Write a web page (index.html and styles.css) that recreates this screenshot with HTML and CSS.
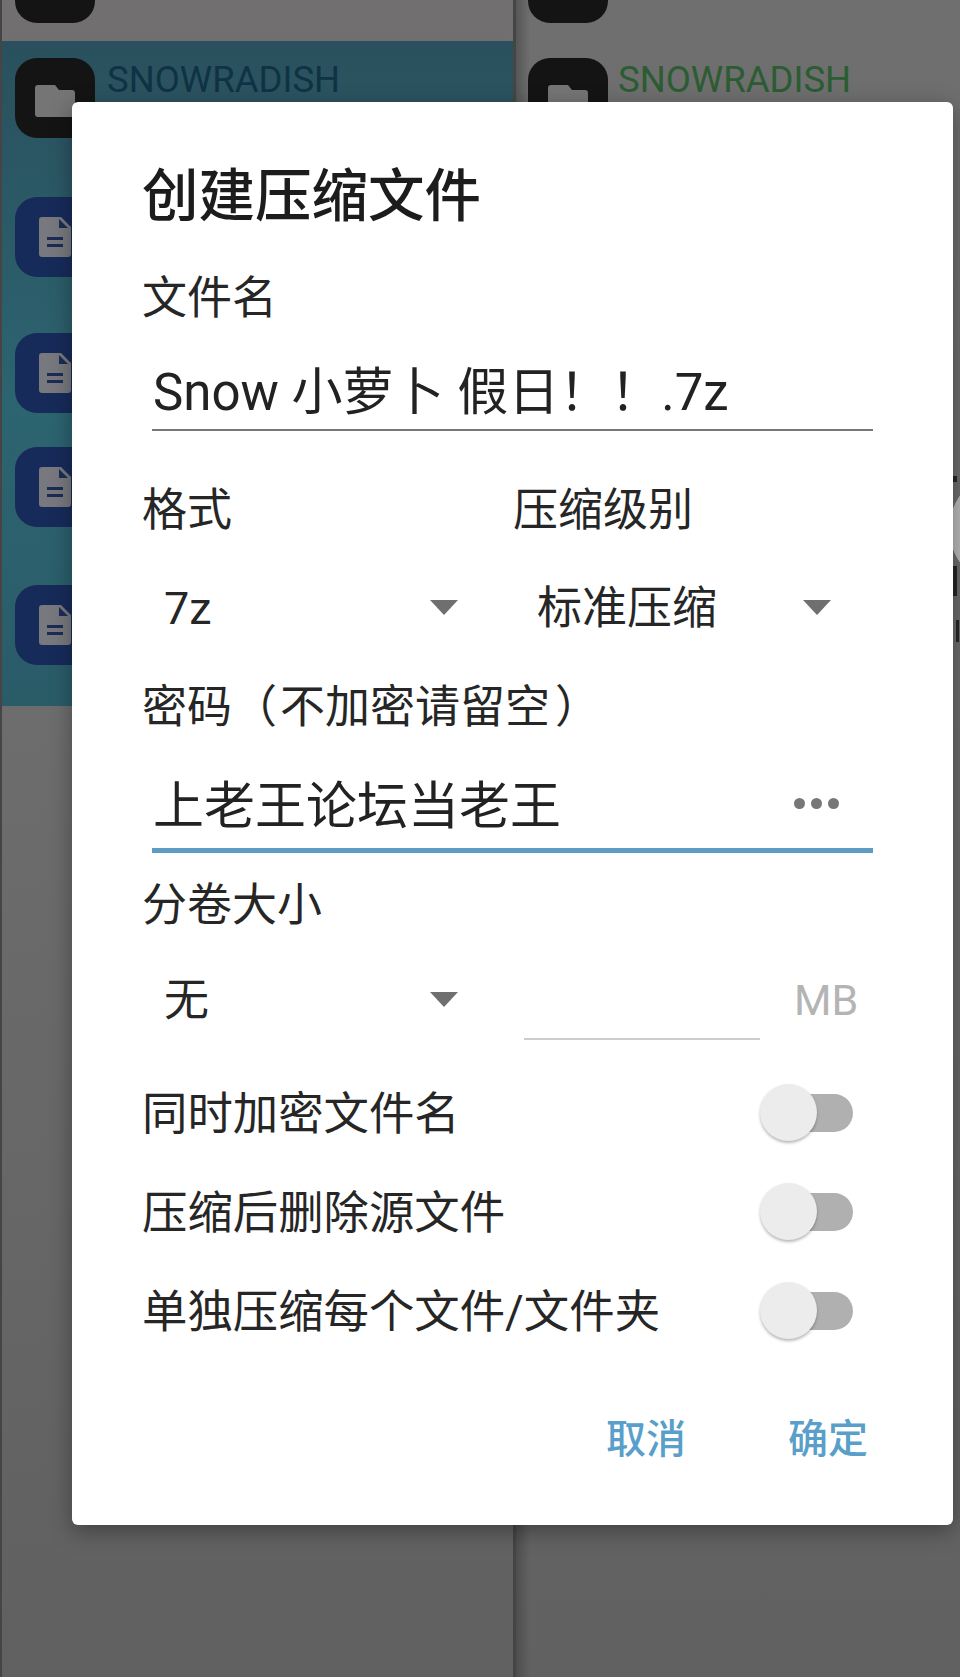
FILE: index.html
```html
<!DOCTYPE html>
<html lang="zh-CN">
<head>
  <meta charset="UTF-8">
  <meta name="viewport" content="width=device-width, initial-scale=1.0">
  <title>创建压缩文件</title>
  <link rel="stylesheet" href="styles.css">
</head>
<body>

  <div class="panes">
    <div class="pane">
      <div class="row-top"><div class="tile tile-folder tile-cut"></div></div>
      <div class="list list-selected">
        <div class="item">
          <div class="tile tile-folder">
            <svg class="glyph-folder" viewBox="0 0 40 32"><path d="M3 0h17l4 5h13a3 3 0 0 1 3 3v21a3 3 0 0 1-3 3H3a3 3 0 0 1-3-3V3a3 3 0 0 1 3-3z"/></svg>
          </div>
          <span class="name name-left">SNOWRADISH</span>
        </div>
        <div class="item"><div class="tile tile-file"><svg class="glyph-file" viewBox="0 0 32 40"><path class="sheet" d="M3 0h19l10 10v27a3 3 0 0 1-3 3H3a3 3 0 0 1-3-3V3a3 3 0 0 1 3-3z"/><path class="mark" d="M20 2l9 9h-9zM8 20h16v3H8zM8 27h16v3H8z"/></svg></div></div>
        <div class="item"><div class="tile tile-file"><svg class="glyph-file" viewBox="0 0 32 40"><path class="sheet" d="M3 0h19l10 10v27a3 3 0 0 1-3 3H3a3 3 0 0 1-3-3V3a3 3 0 0 1 3-3z"/><path class="mark" d="M20 2l9 9h-9zM8 20h16v3H8zM8 27h16v3H8z"/></svg></div></div>
        <div class="item"><div class="tile tile-file"><svg class="glyph-file" viewBox="0 0 32 40"><path class="sheet" d="M3 0h19l10 10v27a3 3 0 0 1-3 3H3a3 3 0 0 1-3-3V3a3 3 0 0 1 3-3z"/><path class="mark" d="M20 2l9 9h-9zM8 20h16v3H8zM8 27h16v3H8z"/></svg></div></div>
        <div class="item"><div class="tile tile-file"><svg class="glyph-file" viewBox="0 0 32 40"><path class="sheet" d="M3 0h19l10 10v27a3 3 0 0 1-3 3H3a3 3 0 0 1-3-3V3a3 3 0 0 1 3-3z"/><path class="mark" d="M20 2l9 9h-9zM8 20h16v3H8zM8 27h16v3H8z"/></svg></div></div>
      </div>
    </div>
    <div class="pane pane-right">
      <div class="row-top"><div class="tile tile-folder tile-cut"></div></div>
      <div class="list">
        <div class="item">
          <div class="tile tile-folder">
            <svg class="glyph-folder" viewBox="0 0 40 32"><path d="M3 0h17l4 5h13a3 3 0 0 1 3 3v21a3 3 0 0 1-3 3H3a3 3 0 0 1-3-3V3a3 3 0 0 1 3-3z"/></svg>
          </div>
          <span class="name name-right">SNOWRADISH</span>
        </div>
      </div>
    </div>
  </div>

  <div class="edge-handle"></div>
  <div class="edge-mark edge-mark-a"></div>
  <div class="edge-mark edge-mark-b"></div>
  <div class="edge-mark edge-mark-c"></div>

  <div class="dialog">
    <h1 class="title">创建压缩文件</h1>

    <div class="label label-name">文件名</div>
    <div class="input input-name"><span>Snow 小萝卜 假日<span class="punct">！！</span>.7z</span></div>

    <div class="cols cols-labels">
      <div class="label">格式</div>
      <div class="label">压缩级别</div>
    </div>
    <div class="cols cols-selects">
      <div class="select select-left"><span>7z</span><span class="arrow"></span></div>
      <div class="select select-right"><span>标准压缩</span><span class="arrow"></span></div>
    </div>

    <div class="label label-pass">密码<span class="punct paren-open">（</span>不加密请留空<span class="punct paren-close">）</span></div>
    <div class="input input-pass">
      <span>上老王论坛当老王</span>
      <span class="dots"><i></i><i></i><i></i></span>
    </div>

    <div class="label label-split">分卷大小</div>
    <div class="cols cols-split">
      <div class="select select-left"><span>无</span><span class="arrow"></span></div>
      <div class="split-size">
        <div class="split-field"></div>
        <span class="split-unit">MB</span>
      </div>
    </div>

    <div class="toggle-row"><span>同时加密文件名</span><span class="toggle"><i></i></span></div>
    <div class="toggle-row"><span>压缩后删除源文件</span><span class="toggle"><i></i></span></div>
    <div class="toggle-row"><span>单独压缩每个文件/文件夹</span><span class="toggle"><i></i></span></div>

    <div class="actions">
      <button class="action">取消</button>
      <button class="action">确定</button>
    </div>
  </div>

</body>
</html>
```

FILE: styles.css
```css
html, body {
  margin: 0;
  padding: 0;
}
body {
  width: 960px;
  height: 1677px;
  position: relative;
  overflow: hidden;
  background: #444;
  font-family: Roboto, "Noto Sans CJK SC", sans-serif;
}

/* dimmed file lists behind the dialog */
.panes {
  display: grid;
  grid-template-columns: 511px 1fr;
  gap: 3px;
  height: 1677px;
  padding-left: 2px;
  background: #454545;
}
.pane {
  background: linear-gradient(#716f6f, #6d6d6d 42%, #606060);
  overflow: hidden;
}
.pane-right {
  background: linear-gradient(90deg, rgba(40, 40, 40, .35), rgba(40, 40, 40, 0) 14px),
    linear-gradient(#6f6f6f, #6b6b6b 42%, #616161);
}
.row-top {
  display: flex;
  align-items: flex-start;
  height: 41px;
  padding-left: 13px;
  overflow: hidden;
}
.pane-right .row-top {
  padding-left: 12px;
}
.list {
  display: grid;
  grid-template-rows: 139px 136px 114px 138px 1fr;
  height: 665px;
  padding: 17px 0 0 13px;
  box-sizing: border-box;
}
.pane-right .list {
  padding-left: 12px;
}
.list-selected {
  background: linear-gradient(#2a505d, #2c6470 55%, #2a5c68);
}
.item {
  display: flex;
  align-items: flex-start;
  gap: 12px;
}
.tile {
  flex: none;
  width: 80px;
  height: 80px;
  display: flex;
  align-items: center;
  justify-content: center;
  border-radius: 22px;
}
.tile-cut {
  margin-top: -57px;
}
.tile-folder {
  background: #141414;
}
.tile-file {
  background: #172b5a;
}
.glyph-folder {
  width: 40px;
  height: 32px;
  margin-top: 6px;
  fill: #757575;
}
.glyph-file {
  width: 32px;
  height: 40px;
}
.sheet {
  fill: #78797e;
}
.mark {
  fill: #1c2c54;
}
.name {
  font-size: 36.5px;
  line-height: 36px;
  margin-top: 4px;
}
.name-left {
  color: #0f3345;
}
.name-right {
  margin-left: -2px;
  color: #2b5c32;
}

/* slivers of the list that stick out right of the dialog */
.edge-handle {
  position: absolute;
  right: 0;
  top: 471px;
  width: 11px;
  height: 116px;
  background: radial-gradient(circle 58px at 58px 58px, #b8b8b8 99%, transparent);
}
.edge-mark {
  position: absolute;
  right: 3px;
  width: 4px;
  background: #262626;
}
.edge-mark-a {
  top: 476px;
  height: 6px;
}
.edge-mark-b {
  top: 566px;
  height: 30px;
  width: 5px;
}
.edge-mark-c {
  top: 620px;
  height: 22px;
  right: 1px;
  width: 3px;
}

.dialog {
  position: absolute;
  left: 72px;
  top: 102px;
  width: 881px;
  height: 1423px;
  box-sizing: border-box;
  padding: 65px 80px 0 70px;
  background: #fff;
  border-radius: 6px;
  box-shadow: 0 6px 22px rgba(0, 0, 0, .35);
  color: #222;
}
.title {
  margin: 0;
  font-size: 56.5px;
  line-height: 60px;
  font-weight: 500;
  color: #1c1c1c;
}
.label {
  font-size: 45px;
  line-height: 60px;
  color: #262626;
}
.label-name {
  margin-top: 42px;
}
.label-pass {
  margin-top: 35px;
}
.label-split {
  margin-top: 23px;
}
.punct {
  font-family: "Noto Sans CJK TC", sans-serif;
}
.paren-open {
  margin-right: 3px;
}
.paren-close {
  margin-left: 5px;
}
.input {
  display: flex;
  justify-content: space-between;
  align-items: center;
  margin-left: 10px;
  padding-left: 1px;
  font-size: 51px;
  line-height: 60px;
  height: 60px;
}
.input-name {
  margin-top: 31px;
  padding-bottom: 9px;
  border-bottom: 2px solid #777;
}
.input-pass {
  margin-top: 39px;
  padding-bottom: 11px;
  border-bottom: 5px solid #5f9cc4;
}
.dots {
  display: flex;
  gap: 6px;
  margin: 0 34px 8px 0;
}
.dots i {
  width: 11px;
  height: 11px;
  border-radius: 50%;
  background: #777;
}
.cols {
  display: grid;
  grid-template-columns: 371px 1fr;
}
.cols-labels {
  margin-top: 50px;
}
.cols-selects {
  margin-top: 38px;
}
.cols-split {
  margin-top: 35px;
  height: 94px;
}
.select {
  display: flex;
  justify-content: space-between;
  align-items: center;
  height: 60px;
  font-size: 45px;
  line-height: 60px;
  color: #262626;
}
.select-left {
  padding: 0 55px 0 22px;
}
.select-right {
  padding: 0 42px 0 24px;
}
.arrow {
  width: 0;
  height: 0;
  margin-bottom: 3px;
  border-left: 14px solid transparent;
  border-right: 14px solid transparent;
  border-top: 15px solid #6f6f6f;
}
.split-size {
  display: flex;
  align-items: flex-start;
  margin-left: 11px;
}
.split-field {
  width: 236px;
  height: 67px;
  border-bottom: 2px solid #cdcdcd;
}
.split-unit {
  margin-left: 34px;
  font-size: 43px;
  line-height: 58px;
  color: #b4b4b4;
}
.toggle-row {
  display: flex;
  justify-content: space-between;
  align-items: center;
  height: 99px;
  padding-right: 20px;
  font-size: 45.4px;
  line-height: 60px;
  color: #262626;
}
.toggle {
  position: relative;
  width: 93px;
  height: 38px;
  margin-bottom: 4px;
}
.toggle::before {
  content: "";
  position: absolute;
  left: 15px;
  right: 0;
  top: 0;
  bottom: 0;
  border-radius: 19px;
  background: #b0b0b0;
}
.toggle i {
  position: absolute;
  left: 0;
  top: -10px;
  width: 57px;
  height: 57px;
  border-radius: 50%;
  background: #ececec;
  box-shadow: 0 2px 3px rgba(0, 0, 0, .28);
}
.actions {
  display: flex;
  justify-content: flex-end;
  gap: 102px;
  margin: 53px 5px 0 0;
}
.action {
  padding: 0;
  border: none;
  background: none;
  font-family: inherit;
  font-size: 40px;
  line-height: 50px;
  font-weight: 500;
  color: #5a9fca;
}
```
